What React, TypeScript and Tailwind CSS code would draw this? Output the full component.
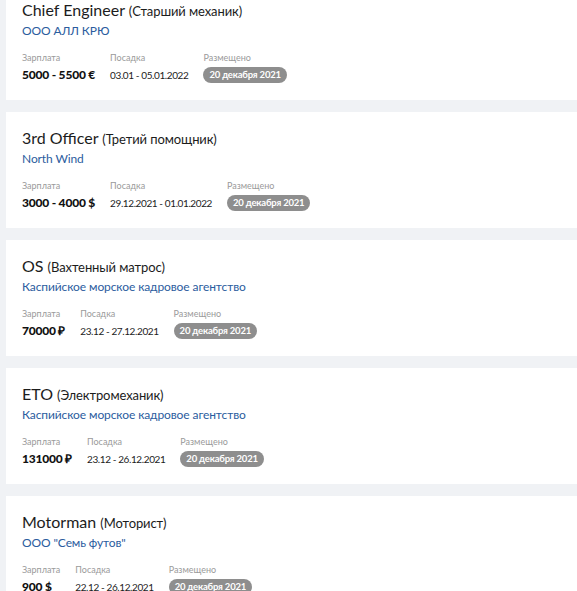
import React from "react";

type Vacancy = {
  title: string;
  titleRu: string;
  company: string;
  salary: string;
  boarding: string;
  posted: string;
};

const vacancies: Vacancy[] = [
  {
    title: "Chief Engineer",
    titleRu: "(Старший механик)",
    company: "ООО АЛЛ КРЮ",
    salary: "5000 - 5500 €",
    boarding: "03.01 - 05.01.2022",
    posted: "20 декабря 2021",
  },
  {
    title: "3rd Officer",
    titleRu: "(Третий помощник)",
    company: "North Wind",
    salary: "3000 - 4000 $",
    boarding: "29.12.2021 - 01.01.2022",
    posted: "20 декабря 2021",
  },
  {
    title: "OS",
    titleRu: "(Вахтенный матрос)",
    company: "Каспийское морское кадровое агентство",
    salary: "70000 ₽",
    boarding: "23.12 - 27.12.2021",
    posted: "20 декабря 2021",
  },
  {
    title: "ETO",
    titleRu: "(Электромеханик)",
    company: "Каспийское морское кадровое агентство",
    salary: "131000 ₽",
    boarding: "23.12 - 26.12.2021",
    posted: "20 декабря 2021",
  },
  {
    title: "Motorman",
    titleRu: "(Моторист)",
    company: 'ООО "Семь футов"',
    salary: "900 $",
    boarding: "22.12 - 26.12.2021",
    posted: "20 декабря 2021",
  },
];

const VacancyCard: React.FC<{ v: Vacancy }> = ({ v }) => {
  return (
    <div className="bg-white ml-[6px] -mr-8 h-[116px] pl-4 pt-[17px]">
      <h3 className="text-[16px] leading-[18px] text-[#1c1c1c]">
        {v.title} <span className="text-[13px] tracking-[-0.1px]">{v.titleRu}</span>
      </h3>
      <div className="mt-[2px] text-[12px] leading-[17px] tracking-[-0.1px] text-[#2b5c9e]">{v.company}</div>

      <div className="flex gap-[15px] mt-[13px]">
        <div>
          <div className="text-[9px] leading-[12px] text-[#9a9a9a]">Зарплата</div>
          <div className="mt-[3px] h-4 flex items-center text-[12px] font-black tracking-[-0.2px] text-[#111]">
            {v.salary}
          </div>
        </div>
        <div>
          <div className="text-[9px] leading-[12px] text-[#9a9a9a]">Посадка</div>
          <div className="mt-[3px] h-4 flex items-center text-[10px] tracking-[-0.4px] text-[#1c1c1c]">
            {v.boarding}
          </div>
        </div>
        <div>
          <div className="text-[9px] leading-[12px] text-[#9a9a9a]">Размещено</div>
          <div className="mt-[3px] h-4 flex items-center rounded-full bg-[#8e8e8e] px-[6px] text-[9.5px] font-bold tracking-[-0.2px] text-white">
            {v.posted}
          </div>
        </div>
      </div>
    </div>
  );
};

export default function App() {
  return (
    <div className="h-[591px] w-[577px] overflow-hidden bg-[#f0f2f5] font-['Lato',sans-serif]">
      <div className="-mt-4 flex flex-col gap-3">
        {vacancies.map((v) => (
          <VacancyCard key={v.title} v={v} />
        ))}
      </div>
    </div>
  );
}
